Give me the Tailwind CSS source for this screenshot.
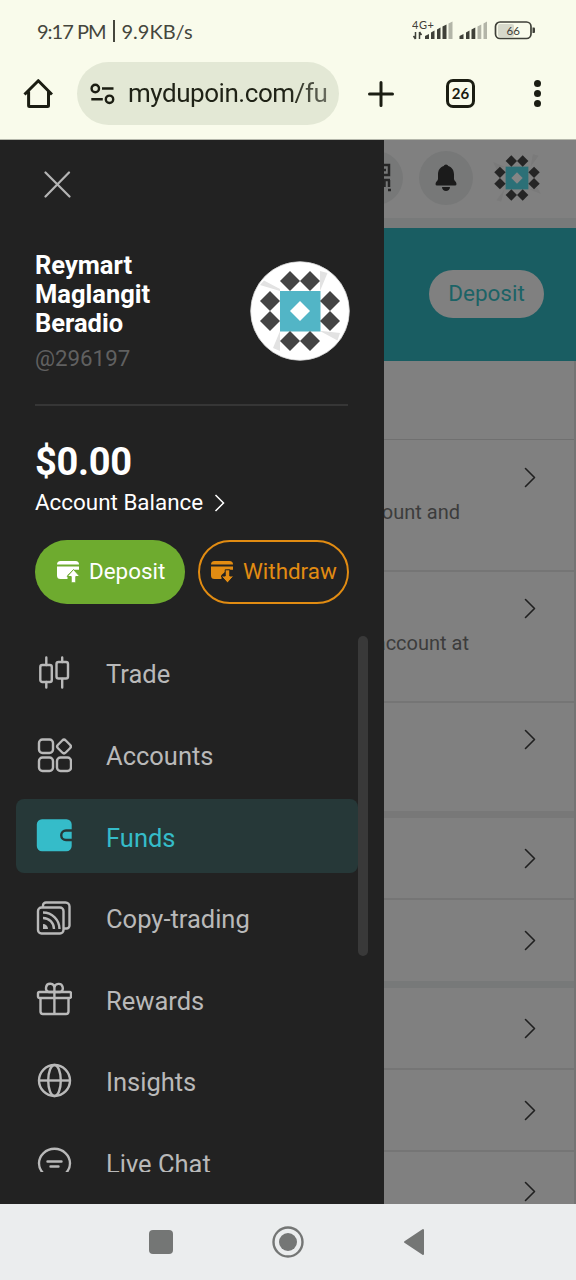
<!DOCTYPE html>
<html lang="en">
<head>
<meta charset="utf-8">
<title>Funds</title>
<script src="https://cdn.jsdelivr.net/npm/@tailwindcss/browser@4"></script>
</head>
<body class="w-[576px] h-[1280px] overflow-hidden bg-[#f9fbeb] font-['Roboto',sans-serif]">
<svg class="hidden">
  <defs>
    <g id="chev"><path d="M1.500 1.500 L10.500 10.500 L1.500 19.500" fill="none" stroke="currentColor" stroke-width="1.600" stroke-linecap="round" stroke-linejoin="round"/></g>
    <path id="d" d="M0-10 10 0 0 10-10 0z"/>
    <g id="diamonds">
      <use href="#d" x="-10" y="-30"/><use href="#d" x="10" y="-30"/><use href="#d" x="-10" y="30"/><use href="#d" x="10" y="30"/>
      <use href="#d" x="-30" y="-10"/><use href="#d" x="-30" y="10"/><use href="#d" x="30" y="-10"/><use href="#d" x="30" y="10"/>
    </g>
    <g id="card">
      <path d="M0 3.500A3.500 3.500 0 0 1 3.500 0h15A3.500 3.500 0 0 1 22 3.500z"/>
      <path d="M0 5.500h22v3.200h-5.500L10.500 14v4H3.500A3.500 3.500 0 0 1 0 14.500z"/>
    </g>
  </defs>
</svg>

<!-- status bar -->
<div class="h-[62px] flex items-center justify-between pl-[37px] pr-[40px] text-[#45463d]">
  <div class="flex items-center text-[20px] leading-none font-['Lato',sans-serif]"><span class="w-[69px] whitespace-nowrap tracking-[-1px]">9:17 PM</span><span class="w-[1.500px] h-[22px] bg-[#45463d] ml-[7px] mr-[7px]"></span><span class="whitespace-nowrap">9.9KB/s</span></div>
  <svg class="w-[124px] h-[24px]" viewBox="0 0 124 24" fill="#3f4038">
    <text x="0" y="10" font-size="11" font-family="Lato" textLength="22">4G+</text>
    <path d="M3.500 13v7M3.500 20l-2-3M7.500 20v-7M7.500 13l2 3" stroke="#3f4038" stroke-width="1.500" fill="none"/>
    <path d="M13 17l4-2v5h-4zM19 13.500l3.500-2V20H19zM25 10.500l3.500-2V20H25zM30.500 7.500l4-2V20h-4z"/>
    <path d="M36.500 4.500l4-2V20h-4z" fill="#b3b5a8"/>
    <path d="M47.500 17l4-2v5h-4zM54 13.500l3.500-2V20H54zM59.500 10.500l3.800-2V20h-3.800z"/>
    <path d="M65.500 7.500l3.800-2V20h-3.800zM71.500 4.500l3.500-2V20h-3.500z" fill="#b3b5a8"/>
    <rect x="86" y="5" width="16" height="13" rx="2" fill="#d7d9cb"/>
    <rect x="83.500" y="3" width="35.500" height="16.500" rx="4.500" fill="none" stroke="#3f4038" stroke-width="1.700"/>
    <path d="M120.500 8.500h1.500q1 0 1 1v3.500q0 1-1 1h-1.500z"/>
    <text x="94.500" y="15.500" font-size="11.500" font-family="Lato" textLength="13.500">66</text>
  </svg>
</div>

<!-- browser bar -->
<div class="h-[78px] flex items-start text-[#1b1d12] border-b border-[#b5b7ab]">
  <svg class="w-[30px] h-[30px] ml-[23px] mt-[17px]" viewBox="0 0 30 30" fill="none" stroke="currentColor" stroke-width="3" stroke-linejoin="round"><path d="M1.500 15.500L15.300 1.700 29 15.500M5.600 12.500V26.500a1 1 0 0 0 1 1H24.500a1 1 0 0 0 1-1V12.500"/></svg>
  <div class="ml-[24px] w-[262px] h-[63px] rounded-full bg-[#e3e8d5] flex items-center">
    <svg class="ml-[13px] w-[26px] h-[22px]" viewBox="0 0 26 22" fill="none" stroke="currentColor" stroke-width="2.400"><circle cx="5.300" cy="5.500" r="3.700"/><path d="M12 5.500h11.500M1.300 16.300h11.500"/><circle cx="19.500" cy="16.300" r="3.700"/></svg>
    <div class="ml-[12px] text-[26px] tracking-[-0.460px] whitespace-nowrap bg-linear-to-r from-[#1f2216] from-80% to-[#6a6d60] bg-clip-text text-transparent">mydupoin.com/fu</div>
  </div>
  <svg class="w-[26px] h-[26px] ml-[29px] mt-[18.500px]" viewBox="0 0 26 26" stroke="currentColor" stroke-width="3" stroke-linecap="round"><path d="M1.500 13h23M13 1.500v23"/></svg>
  <div class="ml-[52px] mt-[17px] w-[29px] h-[29px] shrink-0 rounded-[7px] border-[3px] border-[#1b1d12] flex items-center justify-center text-[15px] font-bold font-['Lato',sans-serif] leading-none">26</div>
  <div class="ml-[59px] mt-[18px] flex flex-col gap-[3px]"><i class="w-[7px] h-[7px] rounded-full bg-current"></i><i class="w-[7px] h-[7px] rounded-full bg-current"></i><i class="w-[7px] h-[7px] rounded-full bg-current"></i></div>
</div>

<main class="relative h-[1064px] overflow-hidden bg-[#808080]">
  <!-- dimmed page -->
  <section class="h-[78px] flex items-center justify-end pr-[34px] pb-[2px] bg-[#808080]">
    <div class="w-[54px] h-[54px] rounded-full bg-[#777878] mr-[16px] flex items-center justify-end pr-[12px]"><svg class="w-[30px] h-[30px]" viewBox="0 0 30 30" fill="none" stroke="#262626" stroke-width="2.500"><path d="M19 2h9v10h-9zM23 7h2M18 17h11M23.500 17v7M28 17v7M19 27h3M27 27h3"/></svg></div>
    <div class="w-[54px] h-[54px] rounded-full bg-[#777878] mr-[19px] flex items-center justify-center"><svg class="w-[22px] h-[28px]" viewBox="0 0 22 28" fill="#1b1b1b"><path d="M11 0.500c1.200 0 2 .8 2.200 1.600C17.200 3.400 19 6.600 19 10.500v4.500c0 1.500 2.500 3 2.500 5q0 1.500-1.500 1.500H2Q.5 21.500.5 20c0-2 2.500-3.500 2.500-5v-4.500C3 6.600 4.800 3.400 8.800 2.100 9 1.300 9.800.5 11 .5zM7 23h8c0 2.500-2 4-4 4s-4-1.500-4-4z"/></svg></div>
    <svg class="w-[50px] h-[50px]" viewBox="-44 -44 88 88"><path d="M-42-28l20 8-14 5zM28-42l10 3-14 19zM42 28l-20-8 14-3zM-28 42l-8-3 14-19z" fill="#7a7a7a"/><rect x="-20" y="-20" width="40" height="40" fill="#2c7077"/><use href="#d" fill="#858585"/><use href="#diamonds" fill="#252525"/></svg>
  </section>
  <div class="h-[10px] bg-[#787a7a]"></div>
  <section class="h-[133px] bg-[#195d62] flex items-center justify-end pr-[32px] pb-px">
    <div class="w-[115px] h-[48px] rounded-full bg-[#808080] flex items-center justify-center text-[22.500px] text-[#1c6366]">Deposit</div>
  </section>
  <section class="flex flex-col text-[20px] text-[#3c3c3c] border-r-2 border-[#747474]">
    <div class="h-[79px] border-b border-[#707070]"></div>
    <div class="h-[132px] border-b-2 border-[#757575] flex justify-between pr-[38px]"><p class="w-[460px] text-right pt-[57px]">Transfer to your account and</p><svg class="w-[12px] h-[21px] mt-[27px] text-[#202020]"><use href="#chev"/></svg></div>
    <div class="h-[131px] border-b-2 border-[#757575] flex justify-between pr-[38px]"><p class="w-[469px] text-right pt-[56px]">Withdraw from your account at</p><svg class="w-[12px] h-[21px] mt-[26px] text-[#202020]"><use href="#chev"/></svg></div>
    <div class="h-[115px] border-b-[7px] border-[#787878] flex justify-end pr-[38px]"><svg class="w-[12px] h-[21px] mt-[26px] text-[#202020]"><use href="#chev"/></svg></div>
    <div class="h-[82px] border-b-2 border-[#757575] flex justify-end pr-[38px]"><svg class="w-[12px] h-[21px] mt-[30px] text-[#202020]"><use href="#chev"/></svg></div>
    <div class="h-[88px] border-b-[7px] border-[#777979] flex justify-end pr-[38px]"><svg class="w-[12px] h-[21px] mt-[30px] text-[#202020]"><use href="#chev"/></svg></div>
    <div class="h-[82px] border-b-2 border-[#757575] flex justify-end pr-[38px]"><svg class="w-[12px] h-[21px] mt-[30px] text-[#202020]"><use href="#chev"/></svg></div>
    <div class="h-[82px] border-b-2 border-[#757575] flex justify-end pr-[38px]"><svg class="w-[12px] h-[21px] mt-[29.500px] text-[#202020]"><use href="#chev"/></svg></div>
    <div class="h-[82px] flex justify-end pr-[38px]"><svg class="w-[12px] h-[21px] mt-[29px] text-[#202020]"><use href="#chev"/></svg></div>
  </section>

  <!-- drawer -->
  <aside class="absolute left-0 top-0 w-[384px] h-full bg-[#222222] text-white">
    <svg class="ml-[43.500px] mt-[31px] w-[27px] h-[27px]" viewBox="0 0 27 27" stroke="#b5b5b5" stroke-width="2.200" stroke-linecap="round"><path d="M1.500 1.500l24 24M25 1.500L1.500 25.500"/></svg>
    <div class="ml-[35px] w-[315px] mt-[52px] h-[124px] flex justify-between">
      <div>
        <div class="text-[25.500px] leading-[29.300px] font-bold pt-[0.500px]">Reymart<br>Maglangit<br>Beradio</div>
        <div class="text-[22.300px] leading-[30px] mt-[5px] text-[#606060]">@296197</div>
      </div>
      <svg class="w-[100px] h-[100px] mt-[11px]" viewBox="-50 -50 100 100"><circle r="49.300" fill="#fff" stroke="#d9d9d9" stroke-width=".8"/><path d="M-40-26l4-4.500L-20-22v2zM20-20v-20l7.500 2zM20 20h2l18 2-2.500 7.500zM-20 20v20l-7-3z" fill="#e2e2e2"/><rect x="-20" y="-20" width="40.500" height="40.500" fill="#52b5c6"/><use href="#d" fill="#fff"/><use href="#diamonds" fill="#444"/></svg>
    </div>
    <div class="ml-[35px] w-[313px] h-[2px] mt-[29.500px] bg-[#363636]"></div>
    <div class="ml-[35px] mt-[34px] text-[38px] leading-[44px] tracking-[-0.300px] font-bold">$0.00</div>
    <div class="ml-[35px] mt-[5.500px] h-[28px] flex items-center text-[22.400px]"><span>Account Balance</span><svg class="ml-[10.500px] w-[11px] h-[18px]" viewBox="0 0 11 18" fill="none" stroke="#fff" stroke-width="1.500"><path d="M1.500 1L9.500 9 1.500 17"/></svg></div>
    <div class="ml-[35px] mt-[23px] flex gap-[13px] text-[22.400px]">
      <div class="w-[150px] h-[64px] rounded-full bg-[#6eab2f] flex items-center pl-[22px]"><svg class="w-[23px] h-[22px]" viewBox="0 0 23 22" fill="#fff"><use href="#card"/><path d="M16.500 8.500l6.300 7h-4v6.300h-4.600v-6.300h-4z" stroke="#6eab2f" stroke-width="1"/></svg><span class="ml-[9px]">Deposit</span></div>
      <div class="w-[151px] h-[64px] rounded-full border-2 border-[#e28c12] text-[#e28c12] flex items-center pl-[11px]"><svg class="w-[23px] h-[22px]" viewBox="0 0 23 22" fill="#e28c12"><use href="#card"/><path d="M16.500 22l6.300-7h-4V8.800h-4.600V15h-4z" stroke="#222" stroke-width="1"/></svg><span class="ml-[9px]">Withdraw</span></div>
    </div>
    <div class="mt-[32px] ml-[16px] flex h-[536px] overflow-hidden">
      <nav class="w-[342px] text-[25.500px] text-[#b9b9b9] [&>div]:h-[74px] [&>div]:mb-[7.600px] [&>div]:flex [&>div]:items-center [&>div]:pl-[20px] [&>div]:pt-[3px] [&_svg]:w-[36px] [&_svg]:h-[36px] [&_svg]:mr-[34px] [&_svg]:mb-[3px] [&_svg]:fill-none [&_svg]:stroke-current [&_svg]:stroke-[2.400px]">
        <div><svg viewBox="0 0 36 36" stroke-linecap="round"><rect x="4.300" y="10" width="11.500" height="17" rx="2"/><rect x="20.500" y="7" width="11.500" height="16.500" rx="2"/><path d="M10.300 2.500V10M10.300 27v5.500M26.200 2.500v4.500M26.200 24v8.500"/></svg>Trade</div>
        <div><svg viewBox="0 0 36 36" stroke-linejoin="round"><rect x="3" y="2.500" width="14" height="13.500" rx="3.500"/><rect x="3" y="20.500" width="14" height="13.500" rx="3.500"/><rect x="21" y="20.500" width="14" height="13.500" rx="3.500"/><rect x="22.500" y="4" width="11" height="11" rx="2.500" transform="rotate(45 28 9.500)"/></svg>Accounts</div>
        <div class="bg-[#263838] rounded-[8px] text-[#35bcc9]"><svg viewBox="0 0 36 36"><rect x="2" y="2.500" width="32.500" height="29.500" rx="4" fill="#35bcc9"/><path d="M36 12.500h-6a4.700 4.700 0 0 0 0 9.500h6" class="stroke-[#263838]"/></svg>Funds</div>
        <div><svg viewBox="0 0 36 36"><rect x="2" y="7.500" width="25.500" height="26" rx="3.500"/><path d="M7 7.500V5.500A3 3 0 0 1 10 2.500H29.500A4 4 0 0 1 33.500 6.500V25.500A3 3 0 0 1 30.500 28.500H28"/><path d="M7 12.500a16.500 16.500 0 0 1 16.500 16.500M7 18a11 11 0 0 1 11 11"/><path d="M7 24a5 5 0 0 1 5 5H7z" fill="currentColor" stroke="none"/></svg>Copy-trading</div>
        <div><svg viewBox="0 0 36 36" stroke-linejoin="round"><rect x="2" y="11" width="33" height="6" rx="1.500"/><path d="M4.500 17V30.500a2.500 2.500 0 0 0 2.500 2.500H30a2.500 2.500 0 0 0 2.500-2.500V17M18.400 11V33M18.400 11H13a4.200 4.200 0 1 1 5.400-4.200zM18.400 11H24a4.200 4.200 0 1 0-5.600-4.200z"/></svg>Rewards</div>
        <div><svg viewBox="0 0 36 36"><circle cx="18.500" cy="17.500" r="15.500"/><ellipse cx="18.500" cy="17.500" rx="6.300" ry="15.500"/><path d="M3 17.500h31"/></svg>Insights</div>
        <div><svg viewBox="0 0 36 36" stroke-linecap="round"><path d="M7.500 28.500A15.500 14.500 0 1 1 29.500 28.500L34 33H4z"/><path d="M11.500 16.500h14M14.500 21.500h8"/></svg>Live Chat</div>
      </nav>
      <div class="w-[10px] h-[320px] rounded-full bg-[#393939]"></div>
    </div>
  </aside>
</main>

<!-- system navigation -->
<div class="h-[76px] bg-[#ebedee] flex items-center justify-between pl-[149px] pr-[151px] text-[#747675]">
  <div class="w-[24px] h-[24px] rounded-[4px] bg-current"></div>
  <svg class="w-[32px] h-[32px]" viewBox="0 0 32 32"><circle cx="16" cy="16" r="14.500" fill="none" stroke="currentColor" stroke-width="2.400"/><circle cx="16" cy="16" r="9" fill="currentColor"/></svg>
  <svg class="w-[22px] h-[28px]" viewBox="0 0 22 28"><path d="M2 14L20 2V26z" fill="currentColor" stroke="currentColor" stroke-width="2" stroke-linejoin="round"/></svg>
</div>
</body>
</html>
